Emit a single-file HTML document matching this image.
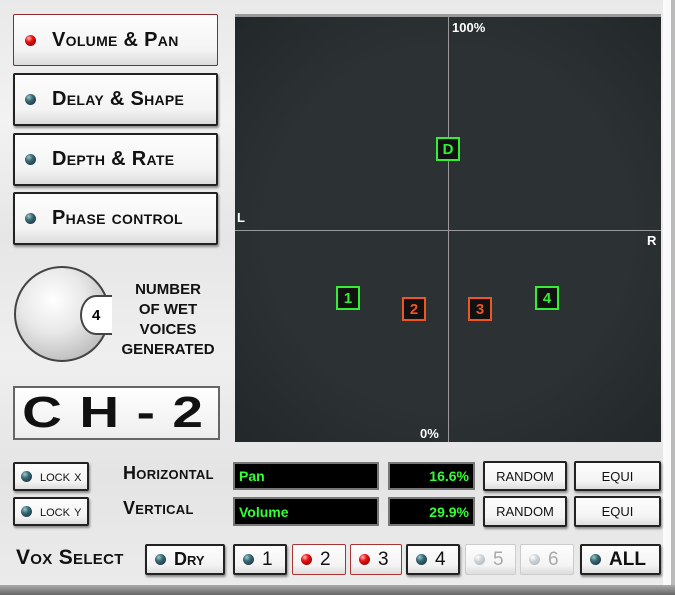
<!DOCTYPE html>
<html><head><style>
*{box-sizing:border-box;margin:0;padding:0}
body{width:675px;height:595px;overflow:hidden;position:relative;font-family:"Liberation Sans",sans-serif;
background:linear-gradient(180deg,#e9e9e9 0%,#f2f2f2 20%,#e6e6e6 40%,#efefef 60%,#e4e4e4 80%,#ececec 100%);}
.a{position:absolute}
.btn{position:absolute;background:linear-gradient(#fdfdfd,#f4f4f4 70%,#dcdcdc);border:2px solid #222;border-radius:2px;box-shadow:1px 2px 2px #888;display:flex;align-items:center;color:#111;font-weight:bold}
.led{width:11px;height:11px;border-radius:50%;background:radial-gradient(circle at 35% 30%,#9cc 0,#3d6b78 35%,#123 100%);flex:none}
.led.r{background:radial-gradient(circle at 35% 30%,#fbb 0,#e11 35%,#600 100%)}
.led.g{background:radial-gradient(circle at 35% 30%,#fff 0,#ccd3d8 40%,#a9b2b8 100%)}
.big{font-size:20px;font-variant:small-caps;letter-spacing:0.3px;font-weight:bold;color:#111}
.disp{position:absolute;background:#000;border:2px solid #777;color:#3f3;font-weight:bold;font-size:14px;display:flex;align-items:center;padding:0 4px}
.mk{position:absolute;width:24px;height:24px;border:2px solid #3e3;background:#111;color:#3e3;font:bold 15px "Liberation Sans",sans-serif;display:flex;align-items:center;justify-content:center}
.mk.o{border-color:#e52;color:#e52}
.lbl{position:absolute;color:#fff;font:bold 13px "Liberation Sans",sans-serif}
</style></head><body>
<div class="a" style="left:663px;top:0;width:8px;height:595px;background:#fafafa"></div>
<div class="a" style="left:671px;top:0;width:4px;height:595px;background:#bbb"></div>
<div class="a" style="left:0;top:585px;width:675px;height:10px;background:linear-gradient(#aaa,#666)"></div>

<div class="btn big" style="left:13px;top:14px;width:205px;height:52px;border-color:#8a2a2a;border-width:1px;box-shadow:none"><span class="led r" style="margin:0 16px 0 11px"></span>Volume &amp; Pan</div>
<div class="btn big" style="left:13px;top:73px;width:205px;height:53px"><span class="led" style="margin:0 16px 0 10px"></span>Delay &amp; Shape</div>
<div class="btn big" style="left:13px;top:133px;width:205px;height:53px"><span class="led" style="margin:0 16px 0 10px"></span>Depth &amp; Rate</div>
<div class="btn big" style="left:13px;top:192px;width:205px;height:53px"><span class="led" style="margin:0 16px 0 10px"></span>Phase control</div>

<div class="a" style="left:14px;top:266px;width:96px;height:96px;border-radius:50%;border:2px solid #444;background:radial-gradient(circle at 40% 35%,#fff 0,#e8e8e8 40%,#bbb 80%,#888 100%)"></div>
<div class="a" style="left:80px;top:295px;width:32px;height:40px;border-radius:50% 0 0 50%;border:2px solid #444;border-right:none;background:#fff;font:bold 15px 'Liberation Sans';display:flex;align-items:center;padding-left:10px">4</div>
<div class="a" style="left:112px;top:280px;width:112px;text-align:center;font:bold 15px/20px 'Liberation Sans',sans-serif;color:#111">NUMBER<br>OF WET<br>VOICES<br>GENERATED</div>

<div class="a" style="left:13px;top:386px;width:207px;height:54px;border:2px solid #666;background:linear-gradient(#fff,#eee);font:900 44px/50px 'Liberation Sans',sans-serif;letter-spacing:14px;text-align:center;color:#111;padding-left:10px"><span style="display:inline-block;transform:scaleX(1.25)">CH-2</span></div>

<div class="a" style="left:235px;top:14px;width:426px;height:428px;background:radial-gradient(ellipse at center,#2c3233 60%,#222829 100%);border-top:3px solid #999"></div>
<div class="a" style="left:448px;top:17px;width:1px;height:425px;background:#999"></div>
<div class="a" style="left:235px;top:230px;width:426px;height:1px;background:#999"></div>
<div class="lbl" style="left:452px;top:20px">100%</div>
<div class="lbl" style="left:237px;top:210px">L</div>
<div class="lbl" style="left:647px;top:233px">R</div>
<div class="lbl" style="left:420px;top:426px">0%</div>
<div class="mk" style="left:436px;top:137px">D</div>
<div class="mk" style="left:336px;top:286px">1</div>
<div class="mk o" style="left:402px;top:297px">2</div>
<div class="mk o" style="left:468px;top:297px">3</div>
<div class="mk" style="left:535px;top:286px">4</div>

<div class="btn" style="left:13px;top:462px;width:76px;height:29px;font-size:15px;font-variant:small-caps;font-weight:normal"><span class="led" style="margin:0 8px 0 6px"></span>lock x</div>
<div class="btn" style="left:13px;top:497px;width:76px;height:29px;font-size:15px;font-variant:small-caps;font-weight:normal"><span class="led" style="margin:0 8px 0 6px"></span>lock y</div>
<div class="a big" style="left:123px;top:463px;font-size:18px">Horizontal</div>
<div class="a big" style="left:123px;top:498px;font-size:18px">Vertical</div>
<div class="disp" style="left:233px;top:462px;width:146px;height:28px">Pan</div>
<div class="disp" style="left:233px;top:497px;width:146px;height:29px">Volume</div>
<div class="disp" style="left:388px;top:462px;width:87px;height:28px;justify-content:flex-end">16.6%</div>
<div class="disp" style="left:388px;top:497px;width:87px;height:29px;justify-content:flex-end">29.9%</div>
<div class="btn" style="left:483px;top:461px;width:84px;height:30px;justify-content:center;font-size:13px;font-weight:normal">RANDOM</div>
<div class="btn" style="left:574px;top:461px;width:87px;height:30px;justify-content:center;font-size:13px;font-weight:normal">EQUI</div>
<div class="btn" style="left:483px;top:496px;width:84px;height:31px;justify-content:center;font-size:13px;font-weight:normal">RANDOM</div>
<div class="btn" style="left:574px;top:496px;width:87px;height:31px;justify-content:center;font-size:13px;font-weight:normal">EQUI</div>

<div class="a big" style="left:16px;top:546px;font-size:21px">Vox Select</div>
<div class="btn" style="left:145px;top:544px;width:80px;height:31px;font-size:18px;font-variant:small-caps"><span class="led" style="margin:0 8px 0 8px"></span>Dry</div>
<div class="btn" style="left:233px;top:544px;width:54px;height:31px;font-size:19px;font-weight:normal"><span class="led" style="margin:0 8px 0 8px"></span>1</div>
<div class="btn" style="left:292px;top:544px;width:54px;height:31px;font-size:19px;font-weight:normal;border:1px solid #a33;box-shadow:none"><span class="led r" style="margin:0 8px 0 8px"></span>2</div>
<div class="btn" style="left:350px;top:544px;width:52px;height:31px;font-size:19px;font-weight:normal;border:1px solid #a33;box-shadow:none"><span class="led r" style="margin:0 8px 0 8px"></span>3</div>
<div class="btn" style="left:406px;top:544px;width:54px;height:31px;font-size:19px;font-weight:normal"><span class="led" style="margin:0 8px 0 8px"></span>4</div>
<div class="btn" style="left:465px;top:544px;width:51px;height:31px;font-size:19px;font-weight:normal;border:1px solid #ccc;color:#aaa;box-shadow:none"><span class="led g" style="margin:0 8px 0 8px"></span>5</div>
<div class="btn" style="left:520px;top:544px;width:54px;height:31px;font-size:19px;font-weight:normal;border:1px solid #ccc;color:#aaa;box-shadow:none"><span class="led g" style="margin:0 8px 0 8px"></span>6</div>
<div class="btn" style="left:580px;top:544px;width:81px;height:31px;font-size:19px"><span class="led" style="margin:0 8px 0 8px"></span>ALL</div>
</body></html>
